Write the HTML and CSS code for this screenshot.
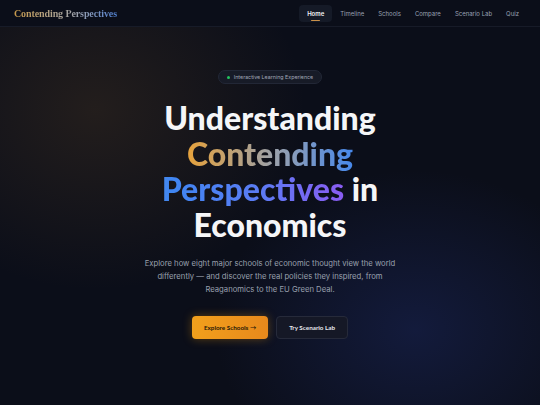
FILE: index.html
```html
<!DOCTYPE html>
<html lang="en">
<head>
<meta charset="utf-8">
<title>Contending Perspectives</title>
<link rel="stylesheet" href="styles.css">
</head>
<body>
<div class="page">
  <header class="nav">
    <div class="logo">Contending Perspectives</div>
    <nav class="links">
      <a class="link active">Home</a>
      <a class="link">Timeline</a>
      <a class="link">Schools</a>
      <a class="link">Compare</a>
      <a class="link">Scenario Lab</a>
      <a class="link">Quiz</a>
    </nav>
  </header>
  <main class="hero">
    <div class="badge"><span class="dot"></span>Interactive Learning Experience</div>
    <h1 class="title">Understanding<br><span class="grad">Contending<br>Perspectives</span> in<br>Economics</h1>
    <p class="lead">Explore how eight major schools of economic thought view the world differently — and discover the real policies they inspired, from Reaganomics to the EU Green Deal.</p>
    <div class="actions">
      <a class="btn primary">Explore Schools →</a>
      <a class="btn secondary">Try Scenario Lab</a>
    </div>
  </main>
</div>
</body>
</html>
```
FILE: styles.css
```css
* { box-sizing: border-box; }
html, body { margin: 0; padding: 0; }
body {
  width: 540px;
  height: 405px;
  overflow: hidden;
  background: #0b0e19;
  font-family: Inter, "Noto Sans", sans-serif;
  color: #e5e7eb;
}
.page {
  position: relative;
  height: 405px;
  background:
    radial-gradient(ellipse 210px 180px at 95px 110px, rgba(120, 85, 40, 0.22), rgba(120,85,40,0) 100%),
    radial-gradient(ellipse 200px 160px at 415px 330px, rgba(40, 60, 150, 0.28), rgba(40,60,150,0) 100%),
    #0b0e19;
}
.nav {
  height: 27px;
  display: flex;
  align-items: center;
  justify-content: space-between;
  padding: 0 15px 0 14px;
  border-bottom: 1px solid #171b28;
  background: #0b0e19;
}
.logo {
  font-family: "Liberation Serif", "DejaVu Serif", serif;
  font-weight: 700;
  font-size: 10px;
  letter-spacing: -0.1px;
  background: linear-gradient(90deg, #c99a4a 0%, #b5a58a 35%, #9aa0ad 62%, #4f7fd0 100%);
  -webkit-background-clip: text;
  background-clip: text;
  color: transparent;
  margin-top: 1px;
}
.links {
  display: flex;
  align-items: center;
}
.link {
  position: relative;
  font-size: 6px;
  color: #9aa1b3;
  padding: 5px 6px;
  border-radius: 4px;
  margin-left: 2px;
}
.link.active {
  background: #151a27;
  color: #f3f4f6;
  font-weight: 600;
  padding: 5px 8px;
}
.link.active::after {
  content: "";
  position: absolute;
  left: 50%;
  bottom: 1px;
  width: 9px;
  height: 1px;
  margin-left: -4.5px;
  background: #c9904a;
  border-radius: 1px;
}
.hero {
  display: flex;
  flex-direction: column;
  align-items: center;
  text-align: center;
  padding-top: 43px;
}
.badge {
  display: flex;
  align-items: center;
  gap: 4px;
  height: 14px;
  padding: 0 8px;
  border-radius: 7px;
  background: #171b27;
  border: 1px solid #222736;
  font-size: 5.3px;
  color: #a3a9b8;
}
.dot {
  width: 3px;
  height: 3px;
  border-radius: 50%;
  background: #22c55e;
}
.title {
  margin: 16px 0 0 0;
  font-family: Lato, "Noto Sans", sans-serif;
  font-weight: 900;
  font-size: 32px;
  line-height: 35.5px;
  color: #f5f6f8;
  letter-spacing: 0;
}
.grad {
  background: linear-gradient(90deg, #e6a23c 0%, #9ba1ab 25%, #3f86f2 50%, #5a7cf4 75%, #8a5cf2 100%);
  -webkit-background-clip: text;
  background-clip: text;
  color: transparent;
}
.lead {
  margin: 15px 0 0 0;
  width: 262px;
  font-size: 7.7px;
  line-height: 13px;
  color: #9aa0ae;
}
.actions {
  display: flex;
  gap: 8px;
  margin-top: 20px;
}
.btn {
  height: 23px;
  display: flex;
  align-items: center;
  border-radius: 4px;
  font-family: Lato, "Noto Sans", sans-serif;
  font-weight: 700;
  font-size: 6.3px;
}
.btn.primary {
  padding: 0 12px;
  background: linear-gradient(90deg, #f2a01c, #e8891c);
  color: #2a1a08;
  box-shadow: 0 0 10px rgba(245, 158, 11, 0.35);
}
.btn.secondary {
  padding: 0 12px;
  background: #151826;
  border: 1px solid #262a3a;
  color: #e5e7eb;
}
```
